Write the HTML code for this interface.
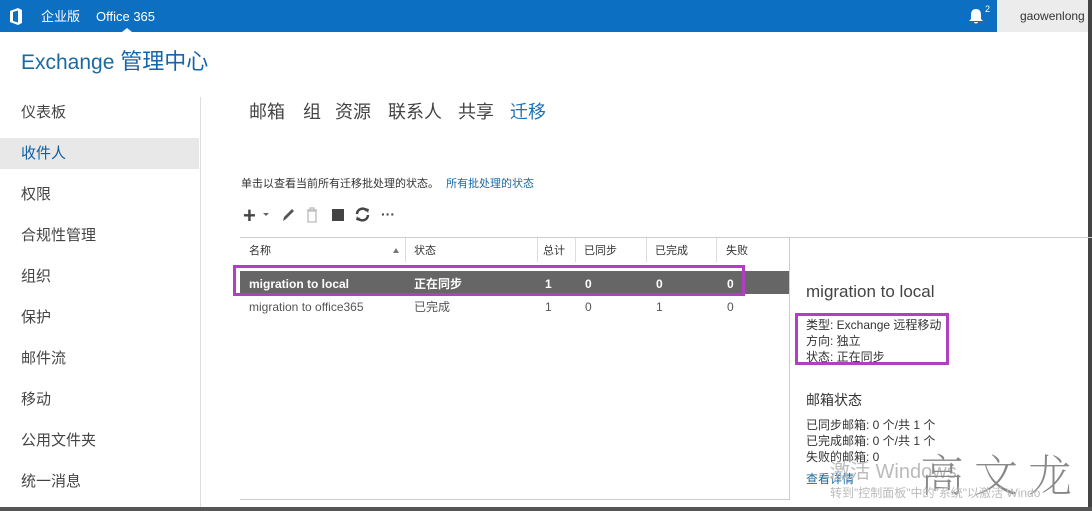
<!DOCTYPE html><html><head><meta charset="utf-8"><style>
*{margin:0;padding:0;box-sizing:border-box}
body{width:1092px;height:511px;overflow:hidden;background:#fff;font-family:"Liberation Sans","Noto Sans CJK SC",sans-serif;color:#333;position:relative}
.a{position:absolute;white-space:nowrap}
.top{left:0;top:0;width:1092px;height:32px;background:#0c6fc1}
.side{font-size:15px;color:#444;left:21px;line-height:18px}
.th{font-size:11px;color:#333;top:244px;line-height:14px}
.r1{font-size:12px;color:#fff;font-weight:bold;top:277px;line-height:14px}
.r2{font-size:12px;color:#555;top:300px;line-height:14px}
.rp{font-size:12px;color:#333;left:806px;line-height:15px}
.tab{font-size:18px;line-height:22px;color:#444;top:101px}
</style></head><body>
<div class="a top"></div>
<svg class="a" style="left:8px;top:8px" width="16" height="17" viewBox="0 0 16 17"><path d="M2 3 L10 0 L14 2 L14 15 L10 17 L2 14 Z M5 4 L10 2.5 L10 14.5 L5 13 Z" fill="#fff" fill-rule="evenodd"/></svg>
<div class="a" style="left:41px;top:9px;color:#fff;font-size:13px;line-height:15px">企业版</div>
<div class="a" style="left:96px;top:9px;color:#fff;font-size:13px;line-height:15px">Office 365</div>
<div class="a" style="left:122px;top:28px;width:0;height:0;border-left:5px solid transparent;border-right:5px solid transparent;border-bottom:4px solid #fff"></div>
<svg class="a" style="left:968px;top:8px" width="16" height="17" viewBox="0 0 16 17"><path d="M8 1 C4 1 3 4 3 7 L3 11 L1 13 L15 13 L13 11 L13 7 C13 4 12 1 8 1Z M6 14 L10 14 C10 16 6 16 6 14Z" fill="#fff"/></svg>
<div class="a" style="left:985px;top:4px;color:#fff;font-size:9px">2</div>
<div class="a" style="left:997px;top:0;width:91px;height:32px;background:#ececec"></div>
<div class="a" style="left:1020px;top:9px;font-size:12px;color:#333">gaowenlong</div>
<div class="a" style="left:1088px;top:0;width:4px;height:511px;background:#444"></div>
<div class="a" style="left:0;top:507px;width:1092px;height:4px;background:#555"></div>
<div class="a" style="left:21px;top:49px;font-size:21px;line-height:25px;color:#1a6aa0">Exchange <span style="color:#1565a8;font-size:22px">管理中心</span></div>
<div class="a" style="left:0;top:138px;width:199px;height:31px;background:#e8e8e8"></div>
<div class="a side" style="top:104px">仪表板</div>
<div class="a side" style="top:145px;color:#0d5fa3">收件人</div>
<div class="a side" style="top:186px">权限</div>
<div class="a side" style="top:227px">合规性管理</div>
<div class="a side" style="top:268px">组织</div>
<div class="a side" style="top:309px">保护</div>
<div class="a side" style="top:350px">邮件流</div>
<div class="a side" style="top:391px">移动</div>
<div class="a side" style="top:432px">公用文件夹</div>
<div class="a side" style="top:473px">统一消息</div>
<div class="a" style="left:200px;top:97px;width:1px;height:410px;background:#ddd"></div>
<div class="a tab" style="left:249px">邮箱</div>
<div class="a tab" style="left:303px">组</div>
<div class="a tab" style="left:335px">资源</div>
<div class="a tab" style="left:388px">联系人</div>
<div class="a tab" style="left:458px">共享</div>
<div class="a tab" style="left:510px;color:#1a72b8">迁移</div>
<div class="a" style="left:241px;top:175px;font-size:11px;color:#333">单击以查看当前所有迁移批处理的状态。 <span style="color:#1a6aa0;margin-left:4px">所有批处理的状态</span></div>
<div class="a" style="left:243px;top:203px;font-size:22px;color:#444;font-weight:bold">+</div>
<div class="a" style="left:263px;top:213px;border-left:3px solid transparent;border-right:3px solid transparent;border-top:3px solid #666"></div>
<svg class="a" style="left:280px;top:207px" width="16" height="16"><path d="M3 14 L4 10 L12 2 L14 4 L6 12 Z" fill="#555"/></svg>
<svg class="a" style="left:305px;top:207px" width="14" height="16"><path d="M2 3h10M5 3V1h4v2M3 4h8v11H3z" fill="none" stroke="#bbb" stroke-width="1.3"/></svg>
<div class="a" style="left:332px;top:209px;width:12px;height:12px;background:#444"></div>
<svg class="a" style="left:355px;top:207px" width="15" height="15" viewBox="0 0 15 15"><path d="M2 7 A5.5 5.5 0 0 1 12 4 M13 8 A5.5 5.5 0 0 1 3 11" fill="none" stroke="#444" stroke-width="2.5"/><path d="M10 1 L14 2 L13 6Z M5 14 L1 13 L2 9Z" fill="#444"/></svg>
<div class="a" style="left:381px;top:206px;font-size:14px;color:#444;font-weight:bold">···</div>
<div class="a" style="left:240px;top:237px;width:852px;height:1px;background:#ccc"></div>
<div class="a" style="left:240px;top:499px;width:549px;height:1px;background:#ccc"></div>
<div class="a" style="left:405px;top:238px;width:1px;height:24px;background:#ddd"></div>
<div class="a" style="left:537px;top:238px;width:1px;height:24px;background:#ddd"></div>
<div class="a" style="left:575px;top:238px;width:1px;height:24px;background:#ddd"></div>
<div class="a" style="left:646px;top:238px;width:1px;height:24px;background:#ddd"></div>
<div class="a" style="left:716px;top:238px;width:1px;height:24px;background:#ddd"></div>
<div class="a" style="left:789px;top:238px;width:1px;height:262px;background:#ccc"></div>
<div class="a th" style="left:249px">名称</div>
<div class="a" style="left:393px;top:248px;border-left:3px solid transparent;border-right:3px solid transparent;border-bottom:5px solid #777"></div>
<div class="a th" style="left:414px">状态</div>
<div class="a th" style="left:543px">总计</div>
<div class="a th" style="left:584px">已同步</div>
<div class="a th" style="left:655px">已完成</div>
<div class="a th" style="left:726px">失败</div>
<div class="a" style="left:240px;top:271px;width:549px;height:23px;background:#666"></div>
<div class="a r1" style="left:249px">migration to local</div>
<div class="a r1" style="left:414px">正在同步</div>
<div class="a r1" style="left:545px">1</div>
<div class="a r1" style="left:585px">0</div>
<div class="a r1" style="left:656px">0</div>
<div class="a r1" style="left:727px">0</div>
<div class="a" style="left:233px;top:265px;width:512px;height:31px;border:3px solid #b13fc4"></div>
<div class="a r2" style="left:249px">migration to office365</div>
<div class="a r2" style="left:414px">已完成</div>
<div class="a r2" style="left:545px">1</div>
<div class="a r2" style="left:585px">0</div>
<div class="a r2" style="left:656px">1</div>
<div class="a r2" style="left:727px">0</div>
<div class="a" style="left:806px;top:282px;font-size:17px;color:#444">migration to local</div>
<div class="a rp" style="top:318px">类型: Exchange 远程移动</div>
<div class="a rp" style="top:334px">方向: 独立</div>
<div class="a rp" style="top:350px">状态: 正在同步</div>
<div class="a" style="left:795px;top:313px;width:154px;height:52px;border:3px solid #b13fc4"></div>
<div class="a" style="left:806px;top:390px;font-size:14px;color:#333">邮箱状态</div>
<div class="a rp" style="top:418px">已同步邮箱: 0 个/共 1 个</div>
<div class="a rp" style="top:434px">已完成邮箱: 0 个/共 1 个</div>
<div class="a rp" style="top:450px">失败的邮箱: 0</div>
<div class="a rp" style="top:472px;color:#1a6aa0">查看详情</div>
<div class="a" style="left:830px;top:455px;font-size:20px;color:#bbb">激活 Windows</div>
<div class="a" style="left:920px;top:440px;font-size:44px;color:#888;font-family:'Noto Serif CJK SC',serif;font-weight:200;letter-spacing:10px">高文龙</div>
<div class="a" style="left:830px;top:484px;font-size:12px;color:#bbb">转到"控制面板"中的"系统"以激活 Windo</div>
</body></html>
